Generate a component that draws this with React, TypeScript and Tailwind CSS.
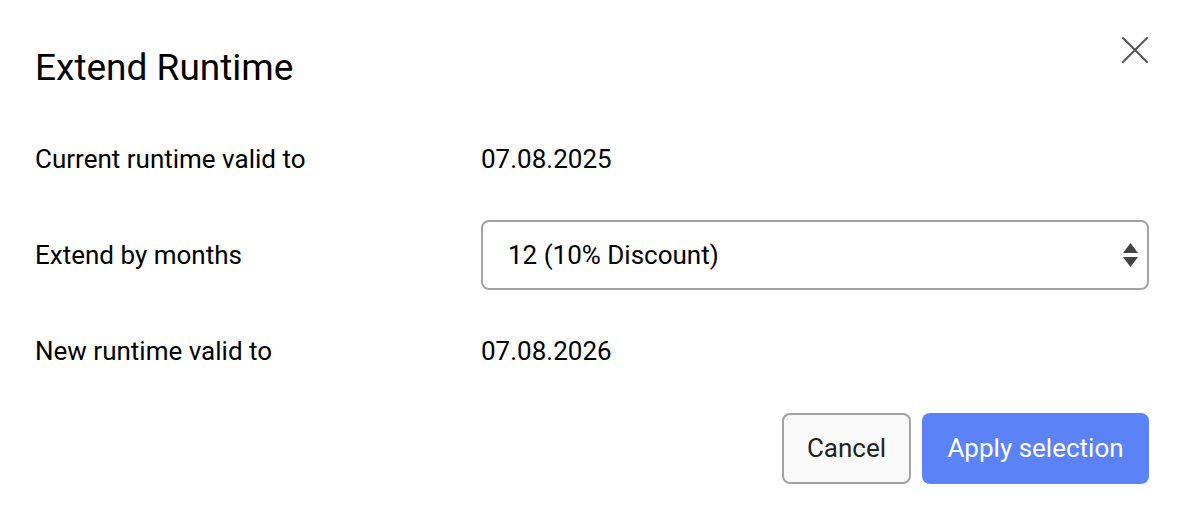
import { X } from "lucide-react";

export default function App() {
  return (
    <div className="w-[1184px] h-[522px] bg-white px-[35px] text-black" style={{ fontFamily: "Roboto, 'Liberation Sans', sans-serif" }}>
      {/* Header */}
      <div className="flex justify-between items-start pt-[26px]">
        <h1 className="mt-[20px] text-[37px] leading-[44px] font-normal">Extend Runtime</h1>
        <button type="button" className="text-[#555] -mr-[10px]">
          <X size={48} strokeWidth={1} />
        </button>
      </div>

      {/* Rows */}
      <div className="grid grid-cols-[446px_1fr] items-center text-[26px] leading-[30px]">
        <div className="mt-[54px]">Current runtime valid to</div>
        <div className="mt-[54px]">07.08.2025</div>

        <div className="mt-[46px]">Extend by months</div>
        <div className="mt-[46px] relative">
          <select className="w-full h-[70px] appearance-none rounded-lg border-2 border-[#a3a3a3] bg-white pl-[25px] text-[26px] outline-none">
            <option>12 (10% Discount)</option>
            <option>6</option>
            <option>3</option>
          </select>
          <svg className="absolute right-[11px] top-[23px] pointer-events-none" width="15" height="25" viewBox="0 0 15 25">
            <path d="M7.5 0 L15 10 L0 10 Z" fill="#444" />
            <path d="M0 14 L15 14 L7.5 24 Z" fill="#444" />
          </svg>
        </div>

        <div className="mt-[46px]">New runtime valid to</div>
        <div className="mt-[46px]">07.08.2026</div>
      </div>

      {/* Actions */}
      <div className="flex justify-end gap-[11px] mt-[47px]">
        <button type="button" className="w-[129px] h-[71px] rounded-lg border-2 border-[#a3a3a3] bg-[#fafafa] text-[26px] text-[#222]">
          Cancel
        </button>
        <button type="button" className="w-[227px] h-[71px] rounded-lg bg-[#5b83f7] text-[26px] text-white">
          Apply selection
        </button>
      </div>
    </div>
  );
}
